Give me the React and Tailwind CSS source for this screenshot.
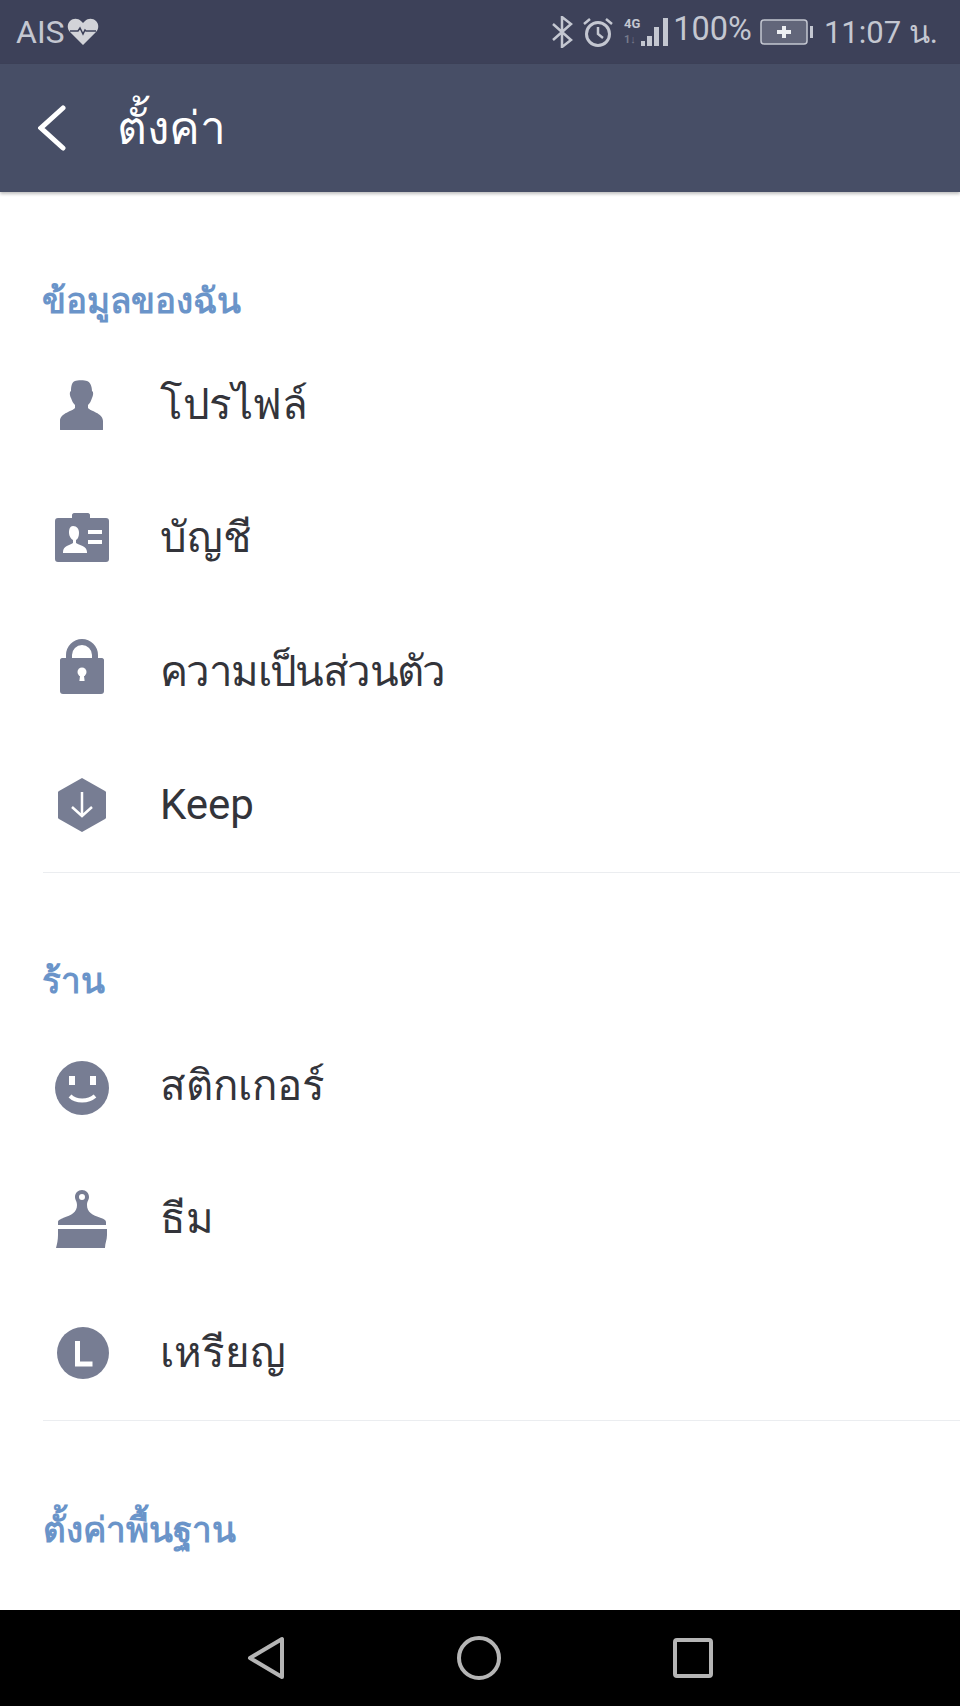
import React from 'react';

const sans = "font-['Roboto','Noto_Sans','DejaVu_Sans',sans-serif]";

function Section({ title, pad, children }) {
  return (
    <section className="ml-[43px] border-b border-[#ebedf0]">
      <h2 className="-ml-px h-[30px] leading-[30px] text-[35px] font-bold text-[#6a94c9]">{title}</h2>
      <div className={pad}>{children}</div>
    </section>
  );
}

function Row({ icon, label, labelClass = '' }) {
  return (
    <div className="flex items-center h-[133.5px] text-[#33343a] text-[42px]">
      <div className="w-[78px] flex justify-center">{icon}</div>
      <span className={`ml-[39px] leading-none ${labelClass}`}>{label}</span>
    </div>
  );
}

const c = '#777d93';

const Profile = () => (
  <svg width="46" height="50" viewBox="0 0 46 50"><path fill={c} d="M16 1c2-1 10-1 12 0 3 1 5 5 5 10 2 1 1 5 0 7-1 3-2 5-4 7v3c2 3 15 5 15 13v8c0 1 0 1-1 1H2c-1 0-1 0-1-1v-8c0-8 13-10 15-13v-3c-2-2-3-4-4-7-1-2-2-6 0-7 0-5 1-9 4-10z" /></svg>
);
const Account = () => (
  <svg width="56" height="50" viewBox="0 0 56 50"><path fill={c} d="M18 2c0-1 1-2 2-2h14c1 0 2 1 2 2v3h16c2 0 3 1 3 3v38c0 2-1 3-3 3H4c-2 0-3-1-3-3V8c0-2 1-3 3-3h14z" /><path fill="#fff" d="M19 13c4 0 6 3 6 7 0 3-1 6-3 7v3c3 2 11 3 11 9v1H9v-1c0-6 7-7 10-9v-3c-2-1-4-4-4-7 0-4 1-7 4-7z" /><rect x="34" y="17" width="14" height="4" fill="#fff" /><rect x="34" y="27" width="14" height="4" fill="#fff" /></svg>
);
const Lock = () => (
  <svg className="mb-[10px]" width="48" height="56" viewBox="0 0 48 56"><path fill="none" stroke={c} strokeWidth="6" d="M11 22v-6a13 13 0 0 1 26 0v6" /><path fill={c} d="M4 19h40c1 0 2 1 2 2v31c0 2-1 3-3 3H5c-2 0-3-1-3-3V21c0-1 1-2 2-2z" /><circle cx="24" cy="33" r="4.5" fill="#fff" /><path fill="#fff" d="M22.2 35h3.6l.8 7h-5.2z" /></svg>
);
const KeepIcon = () => (
  <svg width="50" height="56" viewBox="0 0 50 56"><path fill={c} d="M25 1l23 13c1 .5 1 1 1 2v24c0 1 0 1.500-1 2L25 55 2 42c-1-.5-1-1-1-2V16c0-1 0-1.500 1-2z" /><path fill="none" stroke="#fff" strokeWidth="2.500" d="M25 15v24M15 30l10 9 10-9" /></svg>
);
const Sticker = () => (
  <svg className="mt-[4px]" width="54" height="54" viewBox="0 0 54 54"><circle cx="27" cy="27" r="27" fill={c} /><rect x="14" y="15" width="6" height="9" fill="#fff" /><rect x="35" y="15" width="6" height="9" fill="#fff" /><path fill="none" stroke="#fff" strokeWidth="4" d="M15 35c6 6 18 6 25 0" /></svg>
);
const Theme = () => (
  <svg width="52" height="58" viewBox="0 0 52 58"><path fill={c} fillRule="evenodd" d="M26 0c4 0 7 3 7 7 0 3-2 4-2 8 0 7 5 10 14 13 3 1 5 2 5 4v3H2v-3c0-2 3-3 5-4 9-3 14-6 14-13 0-4-2-5-2-8 0-4 3-7 7-7zm0 4a3 3 0 1 0 0 6 3 3 0 0 0 0-6z" /><path fill={c} d="M2 39h49v6c0 5-2 8-2 13H0c1-4 2-8 2-13z" /></svg>
);
const Coin = () => (
  <svg className="ml-[2px]" width="52" height="52" viewBox="0 0 52 52"><circle cx="26" cy="26" r="26" fill={c} /><path fill="none" stroke="#fff" strokeWidth="5" d="M20.500 14v23h15" /></svg>
);

export default function App() {
  return (
    <div className={`w-[960px] h-[1706px] bg-white flex flex-col ${sans}`} lang="th">
      {/* status bar */}
      <div className="h-16 bg-[#3d4159] flex items-center text-[#c4c7d1] text-[31px] pl-[16px] pr-[22px]">
        <span className="leading-none text-[32px]">AIS</span>
        <svg className="ml-[2px]" width="32" height="28" viewBox="0 0 32 28"><path fill="#d2d3d8" d="M16 27L3 14C0 11 0 6 3 3s8-3 11 0l2 2 2-2c3-3 8-3 11 0s3 8 0 11z" /><path fill="none" stroke="#3d4159" strokeWidth="1.500" d="M3 13h8l2-3 3 6 2-4 1 1h10" /></svg>
        <svg className="ml-auto" width="22" height="32" viewBox="0 0 22 32"><path fill="none" stroke="#c4c7d1" strokeWidth="2.500" d="M2 8l18 16-9 7V1l9 7L2 24" /></svg>
        <svg className="ml-[9px]" width="32" height="32" viewBox="0 0 32 32"><circle cx="16" cy="18" r="11.500" fill="none" stroke="#c4c7d1" strokeWidth="3" /><path fill="none" stroke="#c4c7d1" strokeWidth="2.500" d="M16 11v7l5 4M2 8l6-5M30 8l-6-5" /></svg>
        <svg className="ml-[9px] overflow-visible" width="47" height="32" viewBox="0 0 47 32"><text x="1" y="12" fontSize="13" fontWeight="700" fill="#c4c7d1" fontFamily="Roboto">4G</text><text x="1" y="27" fontSize="11" fontWeight="700" fill="#777b8c" fontFamily="Roboto">1↓</text><rect x="18" y="25" width="4" height="5" fill="#c4c7d1" /><rect x="24" y="20" width="5" height="10" fill="#c4c7d1" /><rect x="31" y="11" width="5" height="19" fill="#c4c7d1" /><rect x="40" y="2" width="5" height="28" fill="#c4c7d1" /></svg>
        <span className="ml-[3px] leading-none text-[32.5px] -translate-y-[3px]">100%</span>
        <svg className="ml-[8px]" width="54" height="28" viewBox="0 0 54 28"><rect x="1" y="2" width="46" height="24" rx="3" fill="#62667a" stroke="#c4c7d1" strokeWidth="1.500" /><path fill="none" stroke="#eceef2" strokeWidth="4" d="M24 8v12M17 14h14" /><rect x="50" y="8" width="3" height="12" fill="#c4c7d1" /></svg>
        <span className="ml-[10px] leading-none">11:07 น.</span>
      </div>

      {/* header */}
      <div className="h-32 bg-[#474e66] flex items-center shadow-[0_2px_3px_rgba(0,0,0,0.25)]">
        <svg className="ml-[38px]" width="28" height="46" viewBox="0 0 28 46"><path fill="none" stroke="#fff" strokeWidth="5" strokeLinecap="round" d="M25 3L3 23l22 20" /></svg>
        <span className="ml-[51px] text-white text-[46px] leading-none">ตั้งค่า</span>
      </div>

      <div className="flex-1 overflow-hidden pt-[95px]">
        <Section title="ข้อมูลของฉัน" pad="pt-[21px]">
          <Row icon={<Profile />} label="โปรไฟล์" labelClass="tracking-[-0.5px]" />
          <Row icon={<Account />} label="บัญชี" />
          <Row icon={<Lock />} label="ความเป็นส่วนตัว" labelClass="tracking-[-1.6px]" />
          <Row icon={<KeepIcon />} label="Keep" />
        </Section>
        <div className="h-[94px]" />
        <Section title="ร้าน" pad="pt-[22px]">
          <Row icon={<Sticker />} label="สติกเกอร์" />
          <Row icon={<Theme />} label="ธีม" />
          <Row icon={<Coin />} label="เหรียญ" />
        </Section>
        <div className="h-[95px]" />
        <h2 className="ml-[43px] h-[30px] leading-[30px] text-[35px] font-bold text-[#6a94c9]">ตั้งค่าพื้นฐาน</h2>
      </div>

      {/* nav bar */}
      <div className="h-24 bg-black flex items-center justify-center gap-[172px]">
        <svg width="38" height="44" viewBox="0 0 38 44"><path fill="none" stroke="#b5b5b5" strokeWidth="4" strokeLinejoin="round" d="M35 3v38L3 22z" /></svg>
        <svg width="44" height="44" viewBox="0 0 44 44"><circle cx="22" cy="22" r="20" fill="none" stroke="#b5b5b5" strokeWidth="4" /></svg>
        <svg width="40" height="40" viewBox="0 0 40 40"><rect x="2" y="2" width="36" height="36" rx="2" fill="none" stroke="#b5b5b5" strokeWidth="4" /></svg>
      </div>
    </div>
  );
}
